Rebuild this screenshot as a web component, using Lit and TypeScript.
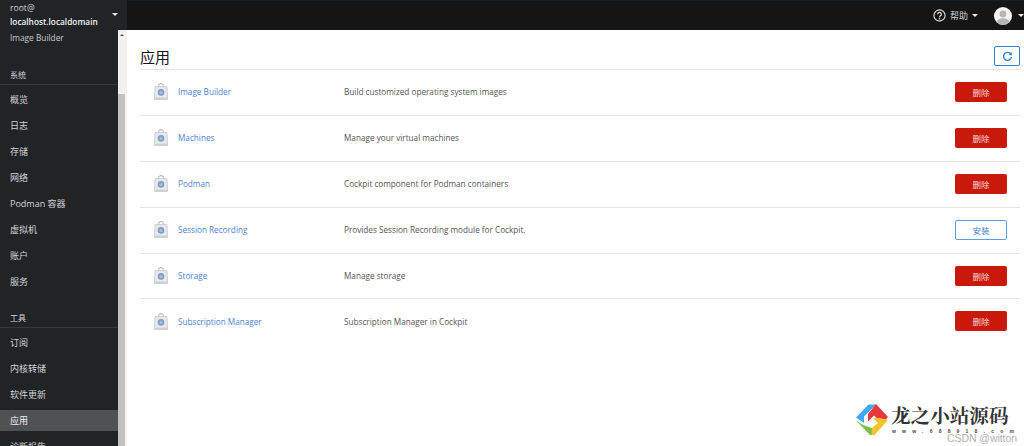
import { LitElement, html, css, svg } from "lit";
import { customElement } from "lit/decorators.js";

const rows = [
  ["Image Builder", "Build customized operating system images", true],
  ["Machines", "Manage your virtual machines", true],
  ["Podman", "Cockpit component for Podman containers", true],
  ["Session Recording", "Provides Session Recording module for Cockpit.", false],
  ["Storage", "Manage storage", true],
  ["Subscription Manager", "Subscription Manager in Cockpit", true],
] as const;

const bag = svg`<svg width="14" height="17" viewBox="0 0 14 17">
  <path d="M4.6 4V2.6a2.4 2 0 0 1 4.8 0V4" fill="none" stroke="#a8a8a8" stroke-width="1"/>
  <path d="M1 3.6h12l.6 12.9H.4z" fill="#e8eaea" stroke="#c0c2c2" stroke-width=".7"/>
  <path d="M1 14.6h12v1.6H1z" fill="#cfd1d1"/>
  <circle cx="7" cy="9.4" r="3.3" fill="#7f9fc9"/>
  <circle cx="7" cy="9.4" r="1.5" fill="#a9c0de"/>
</svg>`;

@customElement("app-root")
export class AppRoot extends LitElement {
  static styles = css`
    :host { display: block; width: 1024px; height: 446px; overflow: hidden; font-family: "Open Sans", "Noto Sans CJK SC", sans-serif; background: #fff; }
    .shell { display: grid; grid-template-columns: 127px 1fr; grid-template-rows: 30px 416px; height: 446px; }
    .host { background: #212427; color: #e8e8e8; display: flex; align-items: center; justify-content: space-between; padding: 0 9px 0 10px; font-size: 8.3px; line-height: 13px; }
    .host b { font-weight: 600; color: #f2f2f2; display: block; }
    .host span { color: #d2d2d2; display: block; font-size: 8.6px; }
    .caret { width: 0; height: 0; border: 3px solid transparent; border-top: 3.5px solid #f0f0f0; border-bottom: 0; }
    .host .caret { margin-bottom: 2px; }
    .topbar { background: #151515; border-top: 1px solid #10202c; display: flex; align-items: center; justify-content: flex-end; color: #d2d2d2; font-size: 9px; }
    .help { display: flex; align-items: center; gap: 4px; margin-right: 16px; }
    .user { display: flex; align-items: center; gap: 6px; }
    .side { display: flex; background: #212427; overflow: hidden; }
    .nav { width: 118px; flex: none; color: #d2d2d2; font-size: 8.3px; }
    .item { height: 26px; display: flex; align-items: center; padding-left: 10px; box-sizing: border-box; font-size: 9px; }
    .first { height: 15px; color: #c8c8c8; font-size: 8.3px; }
    .group { height: 26px; display: flex; align-items: flex-end; padding: 0 0 4px 10px; box-sizing: border-box; border-bottom: 1px solid #34383b; font-size: 8px; margin-bottom: 1px; }
    .g1 { margin-top: 14px; }
    .g2 { margin-top: 8px; }
    .active { background: #4f5255; color: #f0f0f0; height: 21px; margin: 3px 0 2px; }
    .bar { width: 9px; background: #f1f1f1; position: relative; display: flex; flex-direction: column; }
    .bar i { display: block; margin-top: 64px; flex: 1; background: #c1c1c1; width: 7px; }
    .up { position: absolute; left: 2px; top: 4px; width: 0; height: 0; border: 2px solid transparent; border-bottom: 2.5px solid #505050; border-top: 0; }
    main { padding: 0 4px 0 13px; position: relative; min-width: 0; }
    .head { height: 39px; display: flex; justify-content: space-between; align-items: flex-start; }
    h1 { margin: 17px 0 0; font-size: 15px; line-height: 20px; font-weight: 400; color: #151515; }
    .refresh { margin-top: 16px; width: 26px; height: 20px; box-sizing: border-box; background: #fff; border: 1px solid #2b7fd8; border-radius: 2px; padding: 0; display: flex; align-items: center; justify-content: center; }
    .row { height: 45.9px; box-sizing: border-box; border-top: 1px solid #e4e4e4; display: flex; align-items: center; font-size: 8.2px; padding-bottom: 1px; }
    .row:last-child { border-bottom: 1px solid #e4e4e4; height: 46.9px; }
    .icon { margin: 0 0 0 14px; width: 24px; display: flex; }
    .name { width: 166px; color: #4d84d6; }
    .desc { flex: 1; color: #555; }
    .btn { width: 52px; height: 20px; box-sizing: border-box; margin-right: 13px; border-radius: 2px; font: inherit; font-size: 8.5px; border: 1px solid transparent; padding: 0; }
    .del { background: #c9190b; color: #f6d5d2; }
    .inst { background: #fff; border-color: #5c9ee0; color: #3a7cc5; }
    .mark { position: absolute; left: 729px; top: 373px; width: 165px; height: 43px; pointer-events: none; }
    .logo { position: absolute; left: 0; top: 0; }
    .brand { position: absolute; left: 35px; top: 0; font-family: "Noto Serif CJK SC", "Noto Sans CJK SC", serif; font-weight: 700; font-size: 19.6px; line-height: 24px; color: #333; white-space: nowrap; }
    .url { position: absolute; left: 36px; top: 25px; font-size: 5px; line-height: 6px; letter-spacing: 6.2px; color: #444; white-space: nowrap; font-family: "Liberation Sans", sans-serif; font-weight: 700; }
    .csdn { position: absolute; left: 91px; top: 29px; font-size: 10.4px; line-height: 13px; color: #b0b0b0; white-space: nowrap; font-family: "Liberation Sans", sans-serif; }
  `;

  render() {
    const sys = ["概览", "日志", "存储", "网络", "Podman 容器", "虚拟机", "账户", "服务"];
    const tools = ["订阅", "内核转储", "软件更新"];
    return html`<div class="shell">
      <div class="host">
        <div><span>root@</span><b>localhost.localdomain</b></div>
        <div class="caret"></div>
      </div>
      <div class="topbar">
        <div class="help">
          <svg width="13" height="13" viewBox="0 0 13 13">
            <circle cx="6.5" cy="6.5" r="5.6" fill="none" stroke="#e0e0e0" stroke-width="1.1"/>
            <path d="M4.6 5.2a1.9 1.8 0 1 1 2.8 1.6c-.6.4-.9.7-.9 1.4" fill="none" stroke="#e0e0e0" stroke-width="1.2"/>
            <circle cx="6.5" cy="9.8" r=".8" fill="#e0e0e0"/>
          </svg>
          <span>帮助</span><div class="caret"></div>
        </div>
        <div class="user">
          <svg width="18" height="18" viewBox="0 0 18 18">
            <defs><clipPath id="c"><circle cx="9" cy="9" r="9"/></clipPath></defs>
            <circle cx="9" cy="9" r="9" fill="#f4f4f4"/>
            <g clip-path="url(#c)"><circle cx="9" cy="7" r="3.4" fill="#b5b5b5"/><ellipse cx="9" cy="16" rx="6.5" ry="4.8" fill="#b5b5b5"/></g>
          </svg>
          <div class="caret"></div>
        </div>
      </div>
      <div class="side">
        <div class="nav">
          <div class="item first">Image Builder</div>
          <div class="group g1">系统</div>
          ${sys.map((s) => html`<div class="item">${s}</div>`)}
          <div class="group g2">工具</div>
          ${tools.map((s) => html`<div class="item">${s}</div>`)}
          <div class="item active">应用</div>
          <div class="item">诊断报告</div>
        </div>
        <div class="bar"><div class="up"></div><i></i></div>
      </div>
      <main>
        <div class="head">
          <h1>应用</h1>
          <button class="refresh" aria-label="刷新">
            <svg width="11" height="11" viewBox="0 0 11 11">
              <path d="M8.9 3.2A4 4 0 1 0 9.5 6" fill="none" stroke="#2b7fd8" stroke-width="1.4"/>
              <path d="M9.8.9v3.3H6.5z" fill="#2b7fd8"/>
            </svg>
          </button>
        </div>
        ${rows.map(([n, d, inst]) => html`<div class="row">
          <div class="icon">${bag}</div>
          <div class="name">${n}</div>
          <div class="desc">${d}</div>
          <button class="btn ${inst ? "del" : "inst"}">${inst ? "删除" : "安装"}</button>
        </div>`)}
        <div class="mark">
          <svg class="logo" width="32" height="32" viewBox="0 0 32 32">
            <path d="M0 14.5L12.5 1.5H20L8 13.5V20z" fill="#3fa9f5"/>
            <path d="M20 1L32 14l-6 6.5L18 12.5 12 18.5V11z" fill="#e8383d"/>
            <path d="M0 17.5l7 4.5 9 3v7h-2z" fill="#7ac143"/>
            <path d="M32 17L18.5 32H15.5L16 25l6-5-5-5h7z" fill="#f5c32c"/>
          </svg>
          <div class="brand">龙之小站源码</div>
          <div class="url">www.688918.com</div>
          <div class="csdn">CSDN @witton</div>
        </div>
      </main>
    </div>`;
  }
}
